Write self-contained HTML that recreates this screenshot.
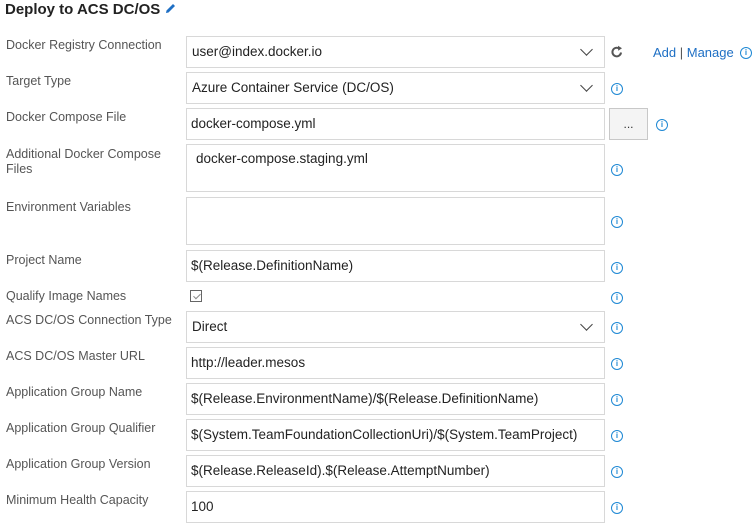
<!DOCTYPE html>
<html><head><style>
body{margin:0;width:756px;height:526px;background:#fff;font-family:"Liberation Sans",sans-serif;position:relative;overflow:hidden}
.t{position:absolute;left:5px;top:1px;font-weight:bold;font-size:15px;color:#222}
.l{position:absolute;left:6px;font-size:12.5px;color:#555;line-height:15px;width:175px}
.i{position:absolute;left:186px;width:419px;border:1px solid #d8d8d8;box-sizing:border-box;font-size:13.5px;color:#222;padding-left:5px}
.c{position:absolute;width:10px;height:10px;border:1.3px solid #1e88d4;border-radius:50%;font-size:8px;color:#1e88d4;text-align:center;line-height:10px;font-weight:bold;left:611px}
.ch{position:absolute;right:13px;top:8px;width:8px;height:8px;border-right:1px solid #444;border-bottom:1px solid #444;transform:rotate(45deg)}
</style></head><body>
<div class="t">Deploy to ACS DC/OS <svg width="13" height="13" viewBox="0 0 13 13" style="vertical-align:-1px"><path d="M2 11 L2.5 8.5 L9 2 L11 4 L4.5 10.5 Z" fill="#1e6fc4"/></svg></div>

<div class="l" style="top:38px">Docker Registry Connection</div>
<div class="i" style="top:36px;height:32px;line-height:30px">user@index.docker.io<span class="ch"></span></div>
<svg style="position:absolute;left:610px;top:45px" width="14" height="14" viewBox="0 0 14 14"><path d="M11 7.5 A4.3 4.3 0 1 1 9 3.4" fill="none" stroke="#555" stroke-width="2"/><path d="M8 0.8 L12 3.2 L8.2 5.8Z" fill="#555"/></svg>
<div style="position:absolute;left:653px;top:45px;font-size:13px;color:#1e6fc4">Add <span style="color:#555">|</span> Manage</div>
<div class="c" style="left:740px;top:47px">i</div>

<div class="l" style="top:74px">Target Type</div>
<div class="i" style="top:72px;height:32px;line-height:30px">Azure Container Service (DC/OS)<span class="ch"></span></div>
<div class="c" style="top:83px">i</div>

<div class="l" style="top:110px">Docker Compose File</div>
<div class="i" style="top:108px;height:32px;line-height:30px;padding-left:4px">docker-compose.yml</div>
<div style="position:absolute;left:609px;top:108px;width:39px;height:32px;box-sizing:border-box;border:1px solid #c8c8c8;background:#f4f4f4;text-align:center;font-size:12px;line-height:30px;color:#333">...</div>
<div class="c" style="left:656px;top:119px">i</div>

<div class="l" style="top:147px">Additional Docker Compose Files</div>
<div class="i" style="top:144px;height:48px;padding:6px 0 0 9px">docker-compose.staging.yml</div>
<div class="c" style="top:164px">i</div>

<div class="l" style="top:200px">Environment Variables</div>
<div class="i" style="top:197px;height:48px"></div>
<div class="c" style="top:216px">i</div>

<div class="l" style="top:253px">Project Name</div>
<div class="i" style="top:250px;height:32px;line-height:30px;padding-left:4px">$(Release.DefinitionName)</div>
<div class="c" style="top:262px">i</div>

<div class="l" style="top:289px">Qualify Image Names</div>
<div style="position:absolute;left:190px;top:290px;width:12px;height:12px;border:1px solid #666;box-sizing:border-box"><div style="position:absolute;left:3.5px;top:1px;width:3px;height:6px;border-right:1px solid #888;border-bottom:1px solid #888;transform:rotate(45deg)"></div></div>
<div class="c" style="top:292px">i</div>

<div class="l" style="top:313px">ACS DC/OS Connection Type</div>
<div class="i" style="top:311px;height:32px;line-height:30px">Direct<span class="ch"></span></div>
<div class="c" style="top:322px">i</div>

<div class="l" style="top:349px">ACS DC/OS Master URL</div>
<div class="i" style="top:347px;height:32px;line-height:30px;padding-left:4px">http://leader.mesos</div>
<div class="c" style="top:358px">i</div>

<div class="l" style="top:385px">Application Group Name</div>
<div class="i" style="top:383px;height:32px;line-height:30px;padding-left:4px">$(Release.EnvironmentName)/$(Release.DefinitionName)</div>
<div class="c" style="top:394px">i</div>

<div class="l" style="top:421px">Application Group Qualifier</div>
<div class="i" style="top:419px;height:32px;line-height:30px;padding-left:4px">$(System.TeamFoundationCollectionUri)/$(System.TeamProject)</div>
<div class="c" style="top:430px">i</div>

<div class="l" style="top:457px">Application Group Version</div>
<div class="i" style="top:455px;height:32px;line-height:30px;padding-left:4px">$(Release.ReleaseId).$(Release.AttemptNumber)</div>
<div class="c" style="top:466px">i</div>

<div class="l" style="top:493px">Minimum Health Capacity</div>
<div class="i" style="top:491px;height:32px;line-height:30px;padding-left:4px">100</div>
<div class="c" style="top:502px">i</div>
</body></html>
